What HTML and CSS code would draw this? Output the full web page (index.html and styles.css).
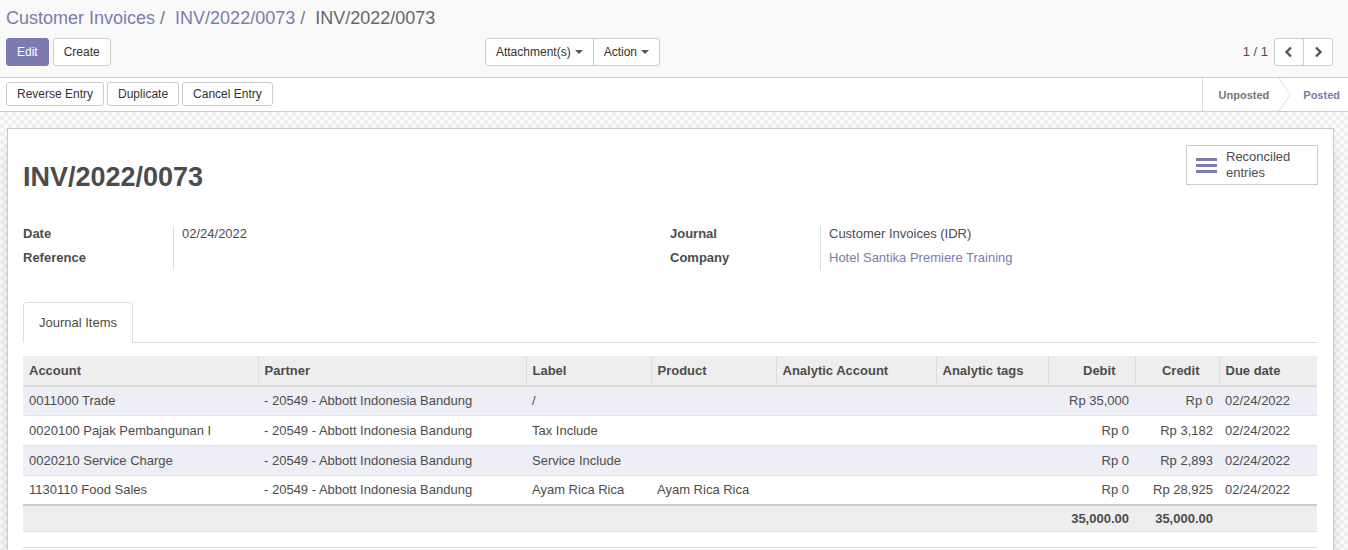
FILE: index.html
```html
<!DOCTYPE html>
<html>
<head>
<meta charset="utf-8">
<link rel="stylesheet" href="styles.css">
</head>
<body>
<div class="cp">
  <div class="breadcrumb">
    <a class="crumb">Customer Invoices</a><span class="sep">/</span>
    <a class="crumb">INV/2022/0073</a><span class="sep">/</span>
    <span class="crumb-active">INV/2022/0073</span>
  </div>
  <div class="cp-bottom">
    <div class="cp-left">
      <div class="btns">
        <button class="btn btn-primary">Edit</button>
        <button class="btn">Create</button>
      </div>
      <div class="btn-group">
        <button class="btn">Attachment(s) <span class="caret"></span></button>
        <button class="btn">Action <span class="caret"></span></button>
      </div>
    </div>
    <div class="cp-right">
      <span class="pager-value">1 / 1</span>
      <div class="btn-group">
        <button class="btn pager-btn"><svg width="10" height="12" viewBox="0 0 10 12"><path d="M7 1.5 L2.5 6 L7 10.5" fill="none" stroke="#555" stroke-width="2.4"/></svg></button>
        <button class="btn pager-btn"><svg width="10" height="12" viewBox="0 0 10 12"><path d="M3 1.5 L7.5 6 L3 10.5" fill="none" stroke="#555" stroke-width="2.4"/></svg></button>
      </div>
    </div>
  </div>
</div>
<div class="statusbar">
  <div class="sb-buttons">
    <button class="btn btn-s">Reverse Entry</button>
    <button class="btn btn-s">Duplicate</button>
    <button class="btn btn-s">Cancel Entry</button>
  </div>
  <div class="sb-status">
    <span class="st st-unposted">Unposted</span>
    <svg class="chev" width="14" height="33" viewBox="0 0 14 33"><path d="M1 0 L12 16.5 L1 33" fill="none" stroke="#ddd" stroke-width="1"/></svg>
    <span class="st st-posted">Posted</span>
  </div>
</div>
<div class="sheet-bg">
  <div class="sheet">
    <div class="sheet-head">
      <h1 class="title">INV/2022/0073</h1>
      <button class="stat-btn">
        <svg width="22" height="18" viewBox="0 0 22 18"><rect x="0" y="2" width="21" height="3" fill="#7c7bad"/><rect x="0" y="8" width="21" height="3" fill="#7c7bad"/><rect x="0" y="14" width="21" height="3" fill="#7c7bad"/></svg>
        <span class="stat-text">Reconciled<br>entries</span>
      </button>
    </div>
    <div class="fields">
      <div class="group">
        <div class="labels"><div class="lbl">Date</div><div class="lbl">Reference</div></div>
        <div class="values"><div class="val">02/24/2022</div><div class="val"></div></div>
      </div>
      <div class="group">
        <div class="labels"><div class="lbl">Journal</div><div class="lbl">Company</div></div>
        <div class="values"><div class="val">Customer Invoices (IDR)</div><div class="val link">Hotel Santika Premiere Training</div></div>
      </div>
    </div>
    <div class="tabs"><div class="tab">Journal Items</div></div>
    <table class="lines">
      <colgroup>
        <col class="c1"><col class="c2"><col class="c3"><col class="c4"><col class="c5"><col class="c6"><col class="c7"><col class="c8"><col class="c9">
      </colgroup>
      <thead>
        <tr><th>Account</th><th>Partner</th><th>Label</th><th>Product</th><th>Analytic Account</th><th>Analytic tags</th><th class="num">Debit</th><th class="num">Credit</th><th>Due date</th></tr>
      </thead>
      <tbody>
        <tr class="odd"><td>0011000 Trade</td><td>- 20549 - Abbott Indonesia Bandung</td><td>/</td><td></td><td></td><td></td><td class="num">Rp 35,000</td><td class="num">Rp 0</td><td>02/24/2022</td></tr>
        <tr><td>0020100 Pajak Pembangunan I</td><td>- 20549 - Abbott Indonesia Bandung</td><td>Tax Include</td><td></td><td></td><td></td><td class="num">Rp 0</td><td class="num">Rp 3,182</td><td>02/24/2022</td></tr>
        <tr class="odd"><td>0020210 Service Charge</td><td>- 20549 - Abbott Indonesia Bandung</td><td>Service Include</td><td></td><td></td><td></td><td class="num">Rp 0</td><td class="num">Rp 2,893</td><td>02/24/2022</td></tr>
        <tr><td>1130110 Food Sales</td><td>- 20549 - Abbott Indonesia Bandung</td><td>Ayam Rica Rica</td><td>Ayam Rica Rica</td><td></td><td></td><td class="num">Rp 0</td><td class="num">Rp 28,925</td><td>02/24/2022</td></tr>
      </tbody>
      <tfoot>
        <tr><td></td><td></td><td></td><td></td><td></td><td></td><td class="num">35,000.00</td><td class="num">35,000.00</td><td></td></tr>
      </tfoot>
    </table>
    <div class="after"></div>
  </div>
</div>
</body>
</html>
```
FILE: styles.css
```css
* { box-sizing: border-box; }
html, body { margin: 0; padding: 0; }
body {
  font-family: "Liberation Sans", Arial, sans-serif;
  font-size: 13px;
  color: #4c4c4c;
  background: #fff;
  overflow: hidden;
  height: 550px;
}
.cp {
  background: #f9f9f9;
  border-bottom: 1px solid #ccc;
  padding: 6px 14px 11px 6px;
  height: 78px;
}
.breadcrumb {
  font-size: 18px;
  line-height: 24px;
  height: 24px;
  white-space: nowrap;
}
.crumb { color: #7c7bad; }
.sep { color: #777; margin: 0 5px 0 5px; }
.crumb-active { color: #666; }
.cp-bottom {
  display: grid;
  grid-template-columns: 1fr 1fr;
  margin-top: 8px;
}
.cp-left {
  display: flex;
  justify-content: space-between;
  padding-right: 10px;
}
.btns { display: flex; gap: 4px; }
.btn {
  font-family: inherit;
  font-size: 12px;
  color: #333;
  background: #fff;
  border: 1px solid #ccc;
  border-radius: 3px;
  height: 28px;
  padding: 0 10px;
  margin: 0;
  display: inline-flex;
  align-items: center;
  gap: 4px;
}
.btn-primary {
  background: #7c7bad;
  border-color: #7c7bad;
  color: #fff;
}
.btn-group { display: flex; }
.btn-group .btn:first-child { border-radius: 3px 0 0 3px; }
.btn-group .btn:last-child { border-radius: 0 3px 3px 0; margin-left: -1px; }
.caret {
  display: inline-block;
  width: 0; height: 0;
  border-left: 4px solid transparent;
  border-right: 4px solid transparent;
  border-top: 4px solid #555;
}
.cp-right {
  display: flex;
  justify-content: flex-end;
  align-items: center;
  gap: 6px;
  padding-right: 1px;
}
.pager-value { font-size: 13px; color: #4c4c4c; margin-top: -2px; }
.pager-btn { width: 30px; justify-content: center; padding: 0; }
.statusbar {
  display: flex;
  justify-content: space-between;
  height: 34px;
  border-bottom: 1px solid #ccc;
  background: #fff;
}
.sb-buttons {
  display: flex;
  gap: 3px;
  padding: 4px 0 0 6px;
}
.btn-s { height: 24px; }
.sb-status {
  display: flex;
  align-items: center;
  border-left: 1px solid #ddd;
  height: 33px;
  font-size: 11px;
  font-weight: bold;
}
.st-unposted { color: #777; padding-left: 16px; }
.chev { margin: 0 11px 0 9px; }
.st-posted { color: #7c7bad; padding-right: 8px; }
.sheet-bg {
  background-color: #f6f6f6;
  background-image: repeating-conic-gradient(#efefef 0 25%, #fafafa 0 50%);
  background-size: 8px 8px;
  padding: 16px 14px 0 7px;
  height: 440px;
}
.sheet {
  background: #fff;
  border: 1px solid #c9c9c9;
  box-shadow: 0 5px 20px -15px #000;
  padding: 16px 16px 0 15px;
  height: 500px;
}
.sheet-head {
  display: flex;
  justify-content: space-between;
  align-items: flex-start;
}
.title {
  margin: 16px 0 0 0;
  font-size: 27px;
  line-height: 32px;
  font-weight: bold;
  color: #4c4c4c;
}
.stat-btn {
  display: flex;
  align-items: center;
  gap: 8px;
  width: 132px;
  height: 40px;
  padding: 0 0 0 9px;
  margin-right: -1px;
  background: #fff;
  border: 1px solid #ccc;
  font-family: inherit;
  font-size: 13px;
  color: #4c4c4c;
  text-align: left;
}
.stat-text { line-height: 16px; }
.fields {
  display: grid;
  grid-template-columns: 647px 1fr;
  margin-top: 29px;
}
.group {
  display: grid;
  grid-template-columns: 150px 1fr;
}
.lbl {
  font-weight: bold;
  height: 24px;
  line-height: 24px;
}
.values {
  border-left: 1px solid #ddd;
  padding-left: 8px;
  margin: 4px 0 2px;
}
.val {
  height: 24px;
  line-height: 24px;
  margin-top: -4px;
}
.val + .val { margin-top: 0; }
.link { color: #7c7bad; }
.tabs {
  display: flex;
  border-bottom: 1px solid #ddd;
  margin-top: 30px;
}
.tab {
  height: 41px;
  line-height: 39px;
  padding: 0 15px;
  border: 1px solid #ddd;
  border-bottom-color: #fff;
  border-radius: 4px 4px 0 0;
  margin-bottom: -1px;
  background: #fff;
  color: #4c4c4c;
}
.lines {
  margin-top: 13px;
  width: 1294px;
  border-collapse: collapse;
  table-layout: fixed;
}
.c1 { width: 235px; } .c2 { width: 268px; } .c3 { width: 125px; }
.c4 { width: 125px; } .c5 { width: 160px; } .c6 { width: 112px; }
.c7 { width: 87px; } .c8 { width: 84px; } .c9 { width: 98px; }
.lines th {
  background: #eee;
  font-weight: bold;
  text-align: left;
  height: 30px;
  padding: 0 6px;
  border-bottom: 2px solid #ddd;
  border-left: 1px solid #ddd;
  white-space: nowrap;
}
.lines th:first-child { border-left: none; }
.lines th.num { padding-right: 19px; }
.lines td {
  height: 29px;
  padding: 0 6px;
  white-space: nowrap;
  overflow: hidden;
}
.lines tbody tr + tr td { border-top: 1px solid #e2e2e2; height: 30px; }
.lines tbody tr.odd td { background: #eeeef6; }
.lines .num { text-align: right; }
.lines tfoot td {
  background: #eee;
  border-top: 2px solid #ccc;
  border-bottom: 1px solid #ddd;
  height: 26px;
  font-weight: bold;
}
.after {
  border-top: 1px solid #ddd;
  margin-top: 15px;
  width: 1294px;
}
```
